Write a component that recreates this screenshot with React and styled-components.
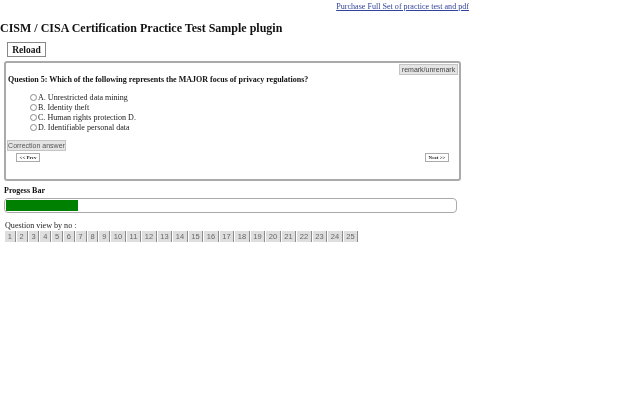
import React from "react";
import styled, { createGlobalStyle } from "styled-components";

const GlobalStyle = createGlobalStyle`
  html, body {
    margin: 0;
    padding: 0;
    background: #fff;
    color: #111;
    font-family: "Liberation Serif", "Times New Roman", serif;
  }
`;

const Page = styled.div`
  width: 640px;
  height: 400px;
  overflow: hidden;
  display: flex;
  flex-flow: column;
  will-change: opacity;
`;

const TopBar = styled.div`
  display: flex;
  justify-content: flex-end;
  height: 12px;
  padding: 1px 171px 0 0;
  box-sizing: border-box;
`;

const PurchaseLink = styled.a`
  font-size: 8.1px;
  line-height: 11px;
  color: #33439a;
  text-decoration: underline;
`;

const Title = styled.h1`
  margin: 10px 0 0;
  font-size: 12px;
  line-height: 12px;
  font-weight: bold;
  color: #111;
`;

const ReloadButton = styled.button`
  align-self: flex-start;
  margin: 8px 0 0 7px;
  width: 39px;
  height: 15px;
  padding: 1px 0 0;
  background: #fff;
  border: 1px solid #888;
  font-family: inherit;
  font-size: 9.5px;
  font-weight: bold;
  color: #111;
`;

const Panel = styled.div`
  position: relative;
  box-sizing: border-box;
  width: 457px;
  height: 120px;
  margin: 4px 0 0 4px;
  padding: 12px 0 0 2px;
  border: 2px solid #aaa;
  border-radius: 3px;
`;

const RemarkButton = styled.button`
  position: absolute;
  top: 1px;
  right: 1px;
  width: 59px;
  height: 11px;
  padding: 0;
  background: #e4e4e4;
  border: 1px solid #c4c4c4;
  font-family: "Liberation Sans", Arial, sans-serif;
  font-size: 7px;
  line-height: 9px;
  color: #444;
`;

const Question = styled.div`
  font-size: 8px;
  line-height: 10px;
  font-weight: bold;
`;

const Options = styled.div`
  display: flex;
  flex-flow: column;
  margin: 7px 0 0 22px;
`;

const Option = styled.label`
  display: flex;
  align-items: center;
  height: 10px;
  font-size: 8.05px;
  color: #222;
`;

const Radio = styled.span`
  box-sizing: border-box;
  width: 7px;
  height: 7px;
  margin-right: 1px;
  border: 1px solid #888;
  border-radius: 50%;
`;

const AnswerButton = styled.button`
  display: block;
  width: 59px;
  height: 11px;
  margin: 8px 0 0 -1px;
  padding: 0;
  background: #e4e4e4;
  border: 1px solid #c4c4c4;
  font-family: "Liberation Sans", Arial, sans-serif;
  font-size: 7px;
  line-height: 9px;
  color: #555;
`;

const NavRow = styled.div`
  display: flex;
  justify-content: space-between;
  margin: 2px 10px 0 8px;
`;

const NavButton = styled.button`
  width: 24px;
  height: 9px;
  padding: 0;
  background: #fff;
  border: 1px solid #aaa;
  font-family: inherit;
  font-size: 5px;
  line-height: 7px;
  font-weight: bold;
  color: #222;
`;

const SectionLabel = styled.div`
  margin: 5px 0 0 4px;
  font-size: 8px;
  line-height: 10px;
  font-weight: bold;
`;

const Track = styled.div`
  box-sizing: border-box;
  width: 453px;
  height: 15px;
  margin: 2px 0 0 4px;
  padding: 1px;
  border: 1px solid #aaa;
  border-radius: 4px;
`;

const Fill = styled.div`
  height: 100%;
  background: #008000;
`;

const ViewLabel = styled.div`
  margin: 8px 0 0 5px;
  font-size: 8.1px;
  line-height: 10px;
  color: #222;
`;

const Numbers = styled.div`
  display: flex;
  margin: 0 0 0 5px;
  gap: 1px;
`;

const NumberCell = styled.button`
  box-sizing: border-box;
  width: ${({ $wide }) => ($wide ? 14.5 : 10.8)}px;
  height: 11px;
  padding: 0;
  background: #dedede;
  border: 0;
  border-right: 1px solid #8c8c8c;
  font-family: "Liberation Sans", Arial, sans-serif;
  font-size: 7.5px;
  line-height: 11px;
  color: #666;
`;

const options = [
  "A. Unrestricted data mining",
  "B. Identity theft",
  "C. Human rights protection D.",
  "D. Identifiable personal data",
];

const numbers = Array.from({ length: 25 }, (_, i) => i + 1);

export default function App() {
  return (
    <Page>
      <GlobalStyle />
      <TopBar>
        <PurchaseLink href="#">Purchase Full Set of practice test and pdf</PurchaseLink>
      </TopBar>
      <Title>CISM / CISA Certification Practice Test Sample plugin</Title>
      <ReloadButton>Reload</ReloadButton>
      <Panel>
        <RemarkButton>remark/unremark</RemarkButton>
        <Question>Question 5: Which of the following represents the MAJOR focus of privacy regulations?</Question>
        <Options>
          {options.map((o) => (
            <Option key={o}>
              <Radio />
              {o}
            </Option>
          ))}
        </Options>
        <AnswerButton>Correction answer</AnswerButton>
        <NavRow>
          <NavButton>&lt;&lt; Prev</NavButton>
          <NavButton>Next &gt;&gt;</NavButton>
        </NavRow>
      </Panel>
      <SectionLabel>Progess Bar</SectionLabel>
      <Track>
        <Fill style={{ width: `${(72 / 451) * 100}%` }} />
      </Track>
      <ViewLabel>Question view by no :</ViewLabel>
      <Numbers>
        {numbers.map((n) => (
          <NumberCell key={n} $wide={n > 9}>
            {n}
          </NumberCell>
        ))}
      </Numbers>
    </Page>
  );
}
